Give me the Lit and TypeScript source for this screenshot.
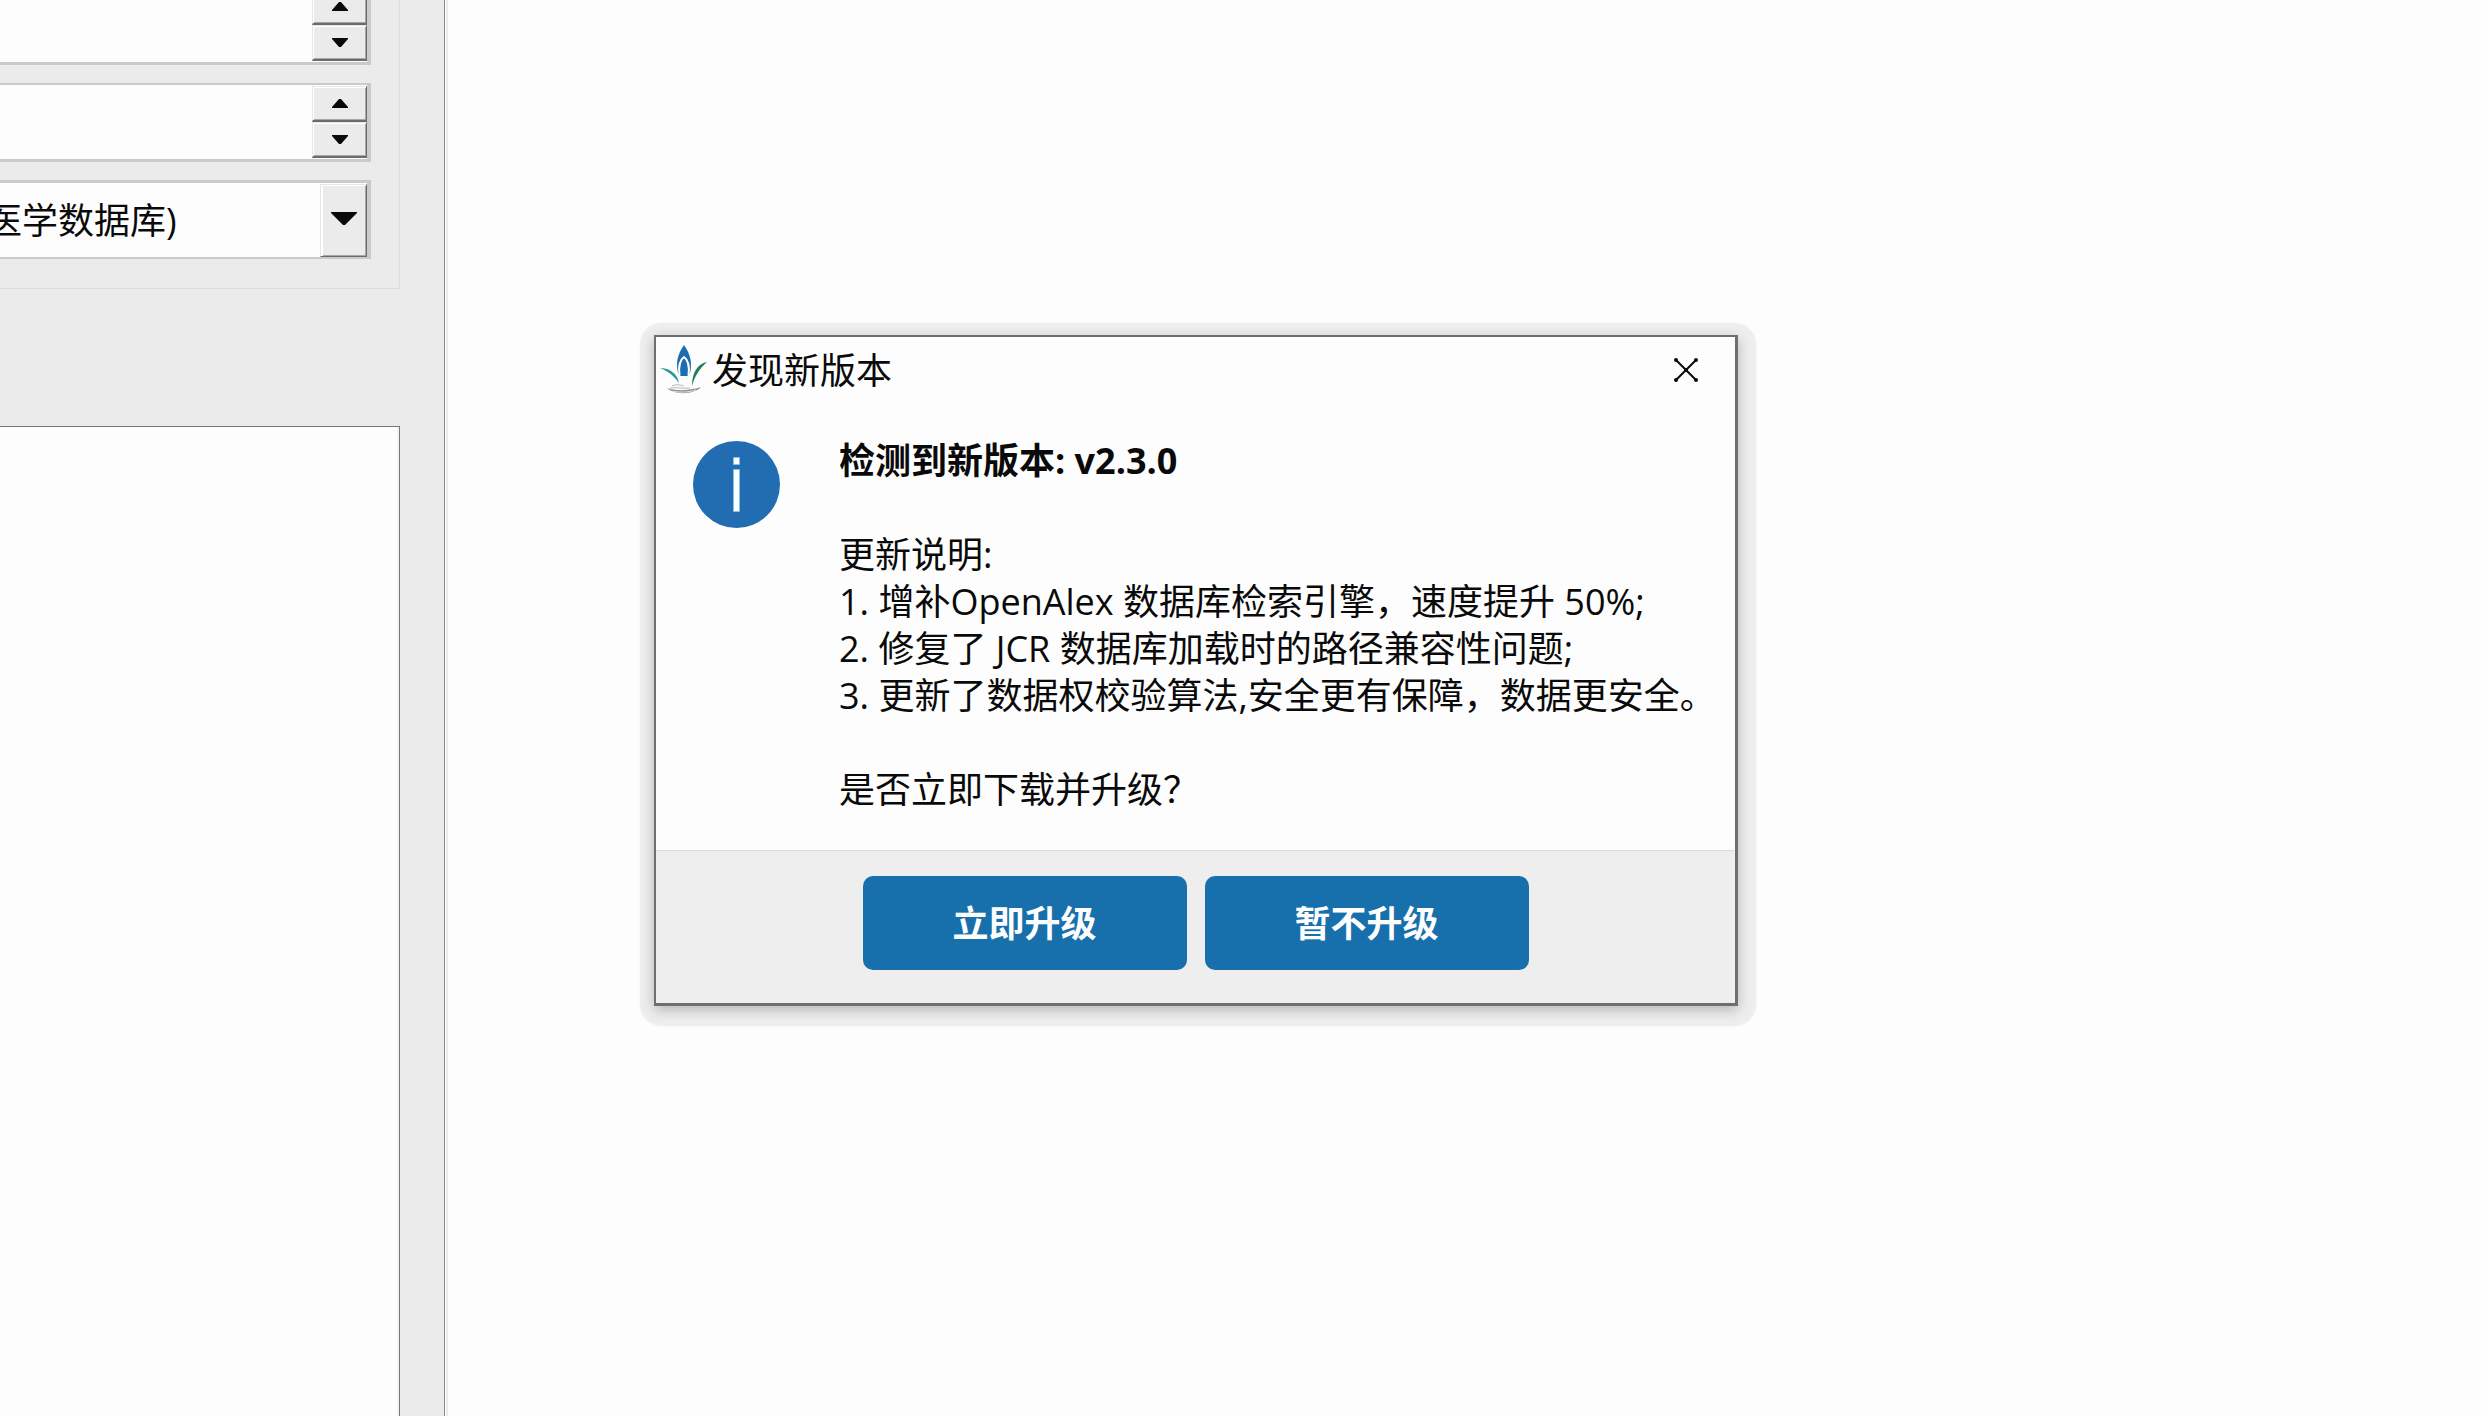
import { LitElement, html, css } from "lit";
import { customElement, property } from "lit/decorators.js";

const FONT = css`"Open Sans", "Noto Sans CJK SC", sans-serif`;

@customElement("spin-field")
class SpinField extends LitElement {
  @property() label = "";

  static styles = css`
    :host { display: block; }
    .field {
      display: flex;
      box-sizing: border-box;
      height: 79px;
      padding: 1px 0;
      background: #fdfdfd;
      border: solid #cacaca;
      border-width: 2px 4px 3px 2px;
    }
    .entry {
      flex: 1;
      min-width: 0;
      border: 0;
      padding: 0 12px;
      background: none;
      font: 36px ${FONT};
      outline: none;
    }
    .steps { display: flex; flex-direction: column; width: 55px; }
    .step {
      flex: 1;
      display: flex;
      align-items: center;
      justify-content: center;
      margin: 0;
      padding: 0;
      background: #ebebeb;
      border: solid;
      border-width: 1px 1px 2px 1px;
      border-color: #e6e6e6 #6c6c6c #6c6c6c #e6e6e6;
      box-shadow: inset 1px 1px 0 #ffffff, inset -1px -1px 0 #a6a6a6;
    }
    .arrow { display: block; fill: #0a0a0a; }
  `;

  render() {
    return html`
      <div class="field">
        <input class="entry" type="text" inputmode="numeric" aria-label=${this.label} />
        <div class="steps">
          <button class="step" type="button" aria-label="+">
            <svg class="arrow" width="16" height="9" viewBox="0 0 16 9"><path d="M0 9V8L7 0H9L16 8V9Z" /></svg>
          </button>
          <button class="step" type="button" aria-label="-">
            <svg class="arrow" width="16" height="9" viewBox="0 0 16 9"><path d="M0 0V1L7 9H9L16 1V0Z" /></svg>
          </button>
        </div>
      </div>
    `;
  }
}

@customElement("side-panel")
class SidePanel extends LitElement {
  static styles = css`
    :host {
      display: flex;
      flex-direction: column;
      box-sizing: border-box;
      width: 445px;
      padding-right: 44px;
      background: #ebebeb;
      border-right: 1px solid #858a93;
      box-shadow: 1px 0 0 #fdfdfd, 3px 0 0 #ececec;
      overflow: hidden;
    }
    .group {
      display: flex;
      flex-direction: column;
      gap: 18px;
      margin: -14px 0 0 -40px;
      padding: 0 28px 29px 0;
      border: solid #dcdcdc;
      border-width: 0 1px 1px 0;
    }
    .combo {
      display: grid;
      grid-template-columns: 1fr 47px;
      box-sizing: border-box;
      height: 79px;
      background: #fdfdfd;
      border: solid #cacaca;
      border-width: 3px 4px 2px 2px;
    }
    .choice {
      grid-area: 1 / 1 / 2 / 3;
      appearance: none;
      min-width: 0;
      margin: 0;
      padding: 0 60px 0 24px;
      border: 0;
      background: none;
      color: #0a0a0a;
      font: 36px ${FONT};
      outline: none;
    }
    .drop {
      grid-area: 1 / 2 / 2 / 3;
      display: flex;
      align-items: center;
      justify-content: center;
      pointer-events: none;
      background: #ebebeb;
      margin-top: 1px;
      border: solid;
      border-width: 1px;
      border-color: #e6e6e6 #6c6c6c #6c6c6c #e6e6e6;
      box-shadow: inset 2px 1px 0 #ffffff, inset -1px -1px 0 #a6a6a6;
    }
    .arrow { display: block; fill: #0a0a0a; margin-bottom: 4px; }
    .list {
      flex: 1;
      margin: 137px 0 0 -40px;
      background: #fdfdfd;
      border: solid #787878;
      border-width: 1px 1px 0 0;
      box-shadow: inset -2px 0 0 #f3f3f3;
    }
  `;

  render() {
    return html`
      <div class="group">
        <spin-field label="1"></spin-field>
        <spin-field label="2"></spin-field>
        <div class="combo">
          <select class="choice" aria-label="医学数据库">
            <option>医学数据库)</option>
          </select>
          <span class="drop">
            <svg class="arrow" width="26" height="13" viewBox="0 0 26 13"><path d="M0 0V1L12 13H14L26 1V0Z" /></svg>
          </span>
        </div>
      </div>
      <div class="list"></div>
    `;
  }
}

@customElement("update-dialog")
class UpdateDialog extends LitElement {
  static styles = css`
    :host {
      display: block;
      box-sizing: border-box;
      padding: 12px 18px 20px 14px;
      border-radius: 22px;
      background: #eeeeee;
      box-shadow: 0 0 3px #f3f3f1;
      color: #0a0a0a;
      font: 36px/47px ${FONT};
    }
    .window {
      background: #fdfdfd;
      border: solid #6d6f6c;
      border-width: 2px 3px 3px 2px;
      box-shadow: 0 4px 12px rgba(0, 0, 0, 0.24);
    }
    .bar { display: flex; align-items: center; gap: 4px; height: 66px; padding: 0 29px 0 4px; }
    .logo { display: block; flex: none; }
    .title { flex: 1; margin: 0; font-size: 36px; font-weight: 400; }
    .close { display: flex; margin: 0; padding: 8px; border: 0; background: none; }
    .body { display: flex; align-items: flex-start; gap: 59px; padding: 34px 24px 37px 37px; }
    .info { display: block; flex: none; margin-top: 4px; }
    .text { flex: 1; min-width: 0; }
    .line { margin: 0; white-space: nowrap; }
    .head { margin: 0 0 47px; font-size: 36px; font-weight: 700; }
    .notes { margin: 0 0 47px; padding: 0; list-style: none; }
    .actions {
      display: flex;
      justify-content: center;
      gap: 18px;
      padding: 25px 0 33px;
      background: #eeeeee;
      border-top: 1px solid #dcdcdc;
    }
    .action {
      width: 324px;
      height: 94px;
      margin: 0;
      padding: 0 0 3px;
      border: 0;
      border-radius: 10px;
      background: #176fab;
      color: #fdfdfd;
      font: 700 36px ${FONT};
    }
  `;

  private notes = [
    "1. 增补OpenAlex 数据库检索引擎，速度提升 50%;",
    "2. 修复了 JCR 数据库加载时的路径兼容性问题;",
    "3. 更新了数据权校验算法,安全更有保障，数据更安全。",
  ];

  render() {
    return html`
      <div class="window" role="dialog" aria-labelledby="title">
        <div class="bar">
          <svg class="logo" width="48" height="50" viewBox="0 0 48 50">
            <path fill="#1c6cb0" d="M24 0C20 6 17 12 17 20C17 25 18 29 20 31H28C30 29 31 25 31 20C31 12 28 6 24 0Z" />
            <path fill="none" stroke="#fdfdfd" stroke-width="2" d="M19.500 31C18 20 21 14 24 12C27 14 30 20 28.500 31" />
            <path fill="#1c6cb0" d="M24 16C20.500 20 20 25 22 31H26C28 25 27.500 20 24 16Z" />
            <path fill="#2d9a94" d="M0 23C8 23 17 27 19 38C14 31 8 26 0 23Z" />
            <path fill="#1f7f5c" d="M47 17C37 19 32 28 32 41C35 31 39 24 47 17Z" />
            <path fill="none" stroke="#b5b5b5" stroke-width="1" d="M12 41C16 39 21 40 24 41M10 43C18 42 24 44 30 43" />
            <path fill="#8c8c8c" d="M7 43C14 46 30 46 41 42C34 50 14 50 7 43Z" />
            <path fill="none" stroke="#e8e8e8" stroke-width="1" d="M13 46C20 48 30 47 36 45" />
          </svg>
          <h1 class="title" id="title">发现新版本</h1>
          <button class="close" type="button" aria-label="关闭">
            <svg width="24" height="24" viewBox="0 0 24 24" fill="none" stroke="#0a0a0a" stroke-width="2" stroke-linecap="round">
              <path d="M2 2L22 22M22 2L2 22" />
              <path stroke-width="4" d="M2 2V2M22 2V2M2 22V22M22 22V22M12 12V12" />
            </svg>
          </button>
        </div>
        <div class="body">
          <svg class="info" width="87" height="87" viewBox="0 0 87 87">
            <circle cx="43.5" cy="43.5" r="43.5" fill="#226db1" />
            <path fill="#ffffff" stroke="#7fc4e8" stroke-width="1" d="M40.5 16.500H46.500V23.500H40.500ZM40.500 28.500H46.500V70.500H40.500Z" />
          </svg>
          <div class="text">
            <h2 class="head line">检测到新版本: v2.3.0</h2>
            <p class="line">更新说明:</p>
            <ul class="notes">
              ${this.notes.map((note) => html`<li class="line">${note}</li>`)}
            </ul>
            <p class="line">是否立即下载并升级？</p>
          </div>
        </div>
        <div class="actions">
          <button class="action" type="button">立即升级</button>
          <button class="action" type="button">暂不升级</button>
        </div>
      </div>
    `;
  }
}

@customElement("app-root")
class AppRoot extends LitElement {
  static styles = css`
    :host {
      display: flex;
      position: relative;
      min-height: 100vh;
      overflow: hidden;
      background: #fdfdfd;
    }
    .side { flex: none; }
    .canvas { flex: 1; }
    .dialog { position: absolute; left: 640px; top: 323px; width: 1116px; }
  `;

  render() {
    return html`
      <side-panel class="side"></side-panel>
      <main class="canvas"></main>
      <update-dialog class="dialog"></update-dialog>
    `;
  }
}
